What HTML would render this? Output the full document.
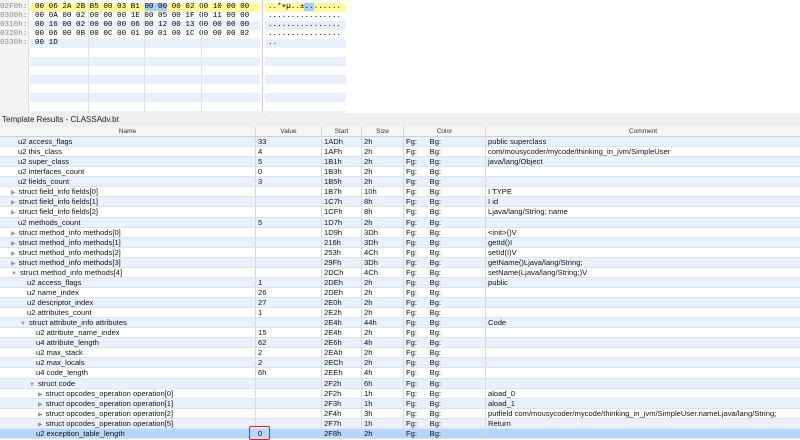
<!DOCTYPE html>
<html><head><meta charset="utf-8"><style>
*{margin:0;padding:0;box-sizing:border-box}
body{width:800px;height:439px;overflow:hidden;background:#fff;font-family:"Liberation Sans",sans-serif;position:relative}
.hex{position:absolute;left:0;top:0;width:800px;height:113px;background:#fff}
.off{position:absolute;left:0;top:0;width:29px;height:113px;background:#f4f4f4;border-right:1px solid #ddd}
.hr{position:absolute;left:0;height:9px;width:350px;font-family:"Liberation Mono",monospace;font-size:7.6px;line-height:9px;white-space:pre}
.hr .o{position:absolute;left:0;color:#888;width:28px}
.hr .h{position:absolute;left:30px;width:230px;height:9px;padding-left:5px}
.hr .a{position:absolute;left:265px;width:81px;height:9px;padding-left:3px}
.st .h,.st .a{background:#e9f0fb}
.yl .h,.yl .a{background:#fdfba0}
.vs{position:absolute;top:0;height:113px;width:1px;background:#e2e2e2}
.gray{position:absolute;left:0;top:113px;width:800px;height:14px;background:#efefef;font-size:8px;line-height:14px;padding-left:2px;color:#222}
.th{position:absolute;top:127px;left:0;width:800px;height:10px;background:#f6f6f6;border-bottom:1px solid #cfcfcf;font-size:6.5px;line-height:10px;color:#333}
.th div,.r div{position:absolute;top:0;height:100%;border-right:1px solid #d8d8d8}
.th div{text-align:center}
.rows{position:absolute;top:137px;left:0;width:800px}
.r{position:relative;height:10.07px;font-size:7.6px;line-height:10px;color:#111;border-bottom:1px solid #dde3ec;white-space:nowrap}
.r:nth-child(odd){background:#ebf1fc}
.r.sel{background:#b6d6fb}
.r div{padding-left:2px;overflow:hidden}
.c1{left:0;width:256px}.c2{left:256px;width:66px}.c3{left:322px;width:40px}.c4{left:362px;width:42px}.c5{left:404px;width:82px}.c6{left:486px;width:314px;border-right:none!important}
.ar{color:#999;font-size:6px;margin-right:3px}
</style></head><body>
<div class="hex">
<div class="off"></div>
<div class="hr" style="top:-6px"><span class="o">0020h:</span><span class="h">00 1D 00 01 00 01 00 00 00 3B 00 02 00 02 00 00</span><span class="a">...............</span></div>
<div class="hr yl" style="top:3px"><span class="o">02F0h:</span><span class="h">00 06 2A 2B B5 00 03 B1 <span style="background:#a9cdf7">00 00</span> 00 02 00 10 00 00</span><span class="a">..*+µ..±<span style="background:#a9cdf7">..</span>......</span></div>
<div class="hr" style="top:12px"><span class="o">0300h:</span><span class="h">00 0A 00 02 00 00 00 1E 00 05 00 1F 00 11 00 00</span><span class="a">................</span></div>
<div class="hr st" style="top:21px"><span class="o">0310h:</span><span class="h">00 16 00 02 00 00 00 06 00 12 00 13 00 00 00 00</span><span class="a">................</span></div>
<div class="hr" style="top:30px"><span class="o">0320h:</span><span class="h">00 06 00 0B 00 0C 00 01 00 01 00 1C 00 00 00 02</span><span class="a">................</span></div>
<div class="hr st" style="top:39px"><span class="o">0330h:</span><span class="h">00 1D</span><span class="a">..</span></div>
<div class="hr st" style="top:57px"><span class="h"></span><span class="a"></span></div>
<div class="hr st" style="top:75px"><span class="h"></span><span class="a"></span></div>
<div class="hr st" style="top:93px"><span class="h"></span><span class="a"></span></div>
<div class="hr st" style="top:111px"><span class="h"></span><span class="a"></span></div>
<div class="vs" style="left:88px"></div><div class="vs" style="left:144px"></div><div class="vs" style="left:201px"></div>
<div class="vs" style="left:262px;background:#ccc"></div>
</div>
<div class="gray">Template Results - CLASSAdv.bt</div>
<div class="th"><div class="c1">Name</div><div class="c2">Value</div><div class="c3">Start</div><div class="c4">Size</div><div class="c5">Color</div><div class="c6" style="text-align:center">Comment</div></div>
<div class="rows">
<div class="r"><div class="c1" style="padding-left:18px">u2 access_flags</div><div class="c2">33</div><div class="c3">1ADh</div><div class="c4">2h</div><div class="c5">Fg:&nbsp;&nbsp;&nbsp;&nbsp;&nbsp;&nbsp;Bg:</div><div class="c6">public superclass</div></div>
<div class="r"><div class="c1" style="padding-left:18px">u2 this_class</div><div class="c2">4</div><div class="c3">1AFh</div><div class="c4">2h</div><div class="c5">Fg:&nbsp;&nbsp;&nbsp;&nbsp;&nbsp;&nbsp;Bg:</div><div class="c6">com/mousycoder/mycode/thinking_in_jvm/SimpleUser</div></div>
<div class="r"><div class="c1" style="padding-left:18px">u2 super_class</div><div class="c2">5</div><div class="c3">1B1h</div><div class="c4">2h</div><div class="c5">Fg:&nbsp;&nbsp;&nbsp;&nbsp;&nbsp;&nbsp;Bg:</div><div class="c6">java/lang/Object</div></div>
<div class="r"><div class="c1" style="padding-left:18px">u2 interfaces_count</div><div class="c2">0</div><div class="c3">1B3h</div><div class="c4">2h</div><div class="c5">Fg:&nbsp;&nbsp;&nbsp;&nbsp;&nbsp;&nbsp;Bg:</div><div class="c6"></div></div>
<div class="r"><div class="c1" style="padding-left:18px">u2 fields_count</div><div class="c2">3</div><div class="c3">1B5h</div><div class="c4">2h</div><div class="c5">Fg:&nbsp;&nbsp;&nbsp;&nbsp;&nbsp;&nbsp;Bg:</div><div class="c6"></div></div>
<div class="r"><div class="c1" style="padding-left:11px"><span class="ar">▶</span>struct field_info fields[0]</div><div class="c2"></div><div class="c3">1B7h</div><div class="c4">10h</div><div class="c5">Fg:&nbsp;&nbsp;&nbsp;&nbsp;&nbsp;&nbsp;Bg:</div><div class="c6">I TYPE</div></div>
<div class="r"><div class="c1" style="padding-left:11px"><span class="ar">▶</span>struct field_info fields[1]</div><div class="c2"></div><div class="c3">1C7h</div><div class="c4">8h</div><div class="c5">Fg:&nbsp;&nbsp;&nbsp;&nbsp;&nbsp;&nbsp;Bg:</div><div class="c6">I id</div></div>
<div class="r"><div class="c1" style="padding-left:11px"><span class="ar">▶</span>struct field_info fields[2]</div><div class="c2"></div><div class="c3">1CFh</div><div class="c4">8h</div><div class="c5">Fg:&nbsp;&nbsp;&nbsp;&nbsp;&nbsp;&nbsp;Bg:</div><div class="c6">Ljava/lang/String; name</div></div>
<div class="r"><div class="c1" style="padding-left:18px">u2 methods_count</div><div class="c2">5</div><div class="c3">1D7h</div><div class="c4">2h</div><div class="c5">Fg:&nbsp;&nbsp;&nbsp;&nbsp;&nbsp;&nbsp;Bg:</div><div class="c6"></div></div>
<div class="r"><div class="c1" style="padding-left:11px"><span class="ar">▶</span>struct method_info methods[0]</div><div class="c2"></div><div class="c3">1D9h</div><div class="c4">3Dh</div><div class="c5">Fg:&nbsp;&nbsp;&nbsp;&nbsp;&nbsp;&nbsp;Bg:</div><div class="c6">&lt;init&gt;()V</div></div>
<div class="r"><div class="c1" style="padding-left:11px"><span class="ar">▶</span>struct method_info methods[1]</div><div class="c2"></div><div class="c3">216h</div><div class="c4">3Dh</div><div class="c5">Fg:&nbsp;&nbsp;&nbsp;&nbsp;&nbsp;&nbsp;Bg:</div><div class="c6">getId()I</div></div>
<div class="r"><div class="c1" style="padding-left:11px"><span class="ar">▶</span>struct method_info methods[2]</div><div class="c2"></div><div class="c3">253h</div><div class="c4">4Ch</div><div class="c5">Fg:&nbsp;&nbsp;&nbsp;&nbsp;&nbsp;&nbsp;Bg:</div><div class="c6">setId(I)V</div></div>
<div class="r"><div class="c1" style="padding-left:11px"><span class="ar">▶</span>struct method_info methods[3]</div><div class="c2"></div><div class="c3">29Fh</div><div class="c4">3Dh</div><div class="c5">Fg:&nbsp;&nbsp;&nbsp;&nbsp;&nbsp;&nbsp;Bg:</div><div class="c6">getName()Ljava/lang/String;</div></div>
<div class="r"><div class="c1" style="padding-left:11px"><span class="ar">▼</span>struct method_info methods[4]</div><div class="c2"></div><div class="c3">2DCh</div><div class="c4">4Ch</div><div class="c5">Fg:&nbsp;&nbsp;&nbsp;&nbsp;&nbsp;&nbsp;Bg:</div><div class="c6">setName(Ljava/lang/String;)V</div></div>
<div class="r"><div class="c1" style="padding-left:27px">u2 access_flags</div><div class="c2">1</div><div class="c3">2DEh</div><div class="c4">2h</div><div class="c5">Fg:&nbsp;&nbsp;&nbsp;&nbsp;&nbsp;&nbsp;Bg:</div><div class="c6">public</div></div>
<div class="r"><div class="c1" style="padding-left:27px">u2 name_index</div><div class="c2">26</div><div class="c3">2DEh</div><div class="c4">2h</div><div class="c5">Fg:&nbsp;&nbsp;&nbsp;&nbsp;&nbsp;&nbsp;Bg:</div><div class="c6"></div></div>
<div class="r"><div class="c1" style="padding-left:27px">u2 descriptor_index</div><div class="c2">27</div><div class="c3">2E0h</div><div class="c4">2h</div><div class="c5">Fg:&nbsp;&nbsp;&nbsp;&nbsp;&nbsp;&nbsp;Bg:</div><div class="c6"></div></div>
<div class="r"><div class="c1" style="padding-left:27px">u2 attributes_count</div><div class="c2">1</div><div class="c3">2E2h</div><div class="c4">2h</div><div class="c5">Fg:&nbsp;&nbsp;&nbsp;&nbsp;&nbsp;&nbsp;Bg:</div><div class="c6"></div></div>
<div class="r"><div class="c1" style="padding-left:20px"><span class="ar">▼</span>struct attribute_info attributes</div><div class="c2"></div><div class="c3">2E4h</div><div class="c4">44h</div><div class="c5">Fg:&nbsp;&nbsp;&nbsp;&nbsp;&nbsp;&nbsp;Bg:</div><div class="c6">Code</div></div>
<div class="r"><div class="c1" style="padding-left:36px">u2 attribute_name_index</div><div class="c2">15</div><div class="c3">2E4h</div><div class="c4">2h</div><div class="c5">Fg:&nbsp;&nbsp;&nbsp;&nbsp;&nbsp;&nbsp;Bg:</div><div class="c6"></div></div>
<div class="r"><div class="c1" style="padding-left:36px">u4 attribute_length</div><div class="c2">62</div><div class="c3">2E6h</div><div class="c4">4h</div><div class="c5">Fg:&nbsp;&nbsp;&nbsp;&nbsp;&nbsp;&nbsp;Bg:</div><div class="c6"></div></div>
<div class="r"><div class="c1" style="padding-left:36px">u2 max_stack</div><div class="c2">2</div><div class="c3">2EAh</div><div class="c4">2h</div><div class="c5">Fg:&nbsp;&nbsp;&nbsp;&nbsp;&nbsp;&nbsp;Bg:</div><div class="c6"></div></div>
<div class="r"><div class="c1" style="padding-left:36px">u2 max_locals</div><div class="c2">2</div><div class="c3">2ECh</div><div class="c4">2h</div><div class="c5">Fg:&nbsp;&nbsp;&nbsp;&nbsp;&nbsp;&nbsp;Bg:</div><div class="c6"></div></div>
<div class="r"><div class="c1" style="padding-left:36px">u4 code_length</div><div class="c2">6h</div><div class="c3">2EEh</div><div class="c4">4h</div><div class="c5">Fg:&nbsp;&nbsp;&nbsp;&nbsp;&nbsp;&nbsp;Bg:</div><div class="c6"></div></div>
<div class="r"><div class="c1" style="padding-left:29px"><span class="ar">▼</span>struct code</div><div class="c2"></div><div class="c3">2F2h</div><div class="c4">6h</div><div class="c5">Fg:&nbsp;&nbsp;&nbsp;&nbsp;&nbsp;&nbsp;Bg:</div><div class="c6"></div></div>
<div class="r"><div class="c1" style="padding-left:38px"><span class="ar">▶</span>struct opcodes_operation operation[0]</div><div class="c2"></div><div class="c3">2F2h</div><div class="c4">1h</div><div class="c5">Fg:&nbsp;&nbsp;&nbsp;&nbsp;&nbsp;&nbsp;Bg:</div><div class="c6">aload_0</div></div>
<div class="r"><div class="c1" style="padding-left:38px"><span class="ar">▶</span>struct opcodes_operation operation[1]</div><div class="c2"></div><div class="c3">2F3h</div><div class="c4">1h</div><div class="c5">Fg:&nbsp;&nbsp;&nbsp;&nbsp;&nbsp;&nbsp;Bg:</div><div class="c6">aload_1</div></div>
<div class="r"><div class="c1" style="padding-left:38px"><span class="ar">▶</span>struct opcodes_operation operation[2]</div><div class="c2"></div><div class="c3">2F4h</div><div class="c4">3h</div><div class="c5">Fg:&nbsp;&nbsp;&nbsp;&nbsp;&nbsp;&nbsp;Bg:</div><div class="c6">putfield com/mousycoder/mycode/thinking_in_jvm/SimpleUser.nameLjava/lang/String;</div></div>
<div class="r"><div class="c1" style="padding-left:38px"><span class="ar">▶</span>struct opcodes_operation operation[5]</div><div class="c2"></div><div class="c3">2F7h</div><div class="c4">1h</div><div class="c5">Fg:&nbsp;&nbsp;&nbsp;&nbsp;&nbsp;&nbsp;Bg:</div><div class="c6">Return</div></div>
<div class="r sel"><div class="c1" style="padding-left:36px">u2 exception_table_length</div><div class="c2">0</div><div class="c3">2F8h</div><div class="c4">2h</div><div class="c5">Fg:&nbsp;&nbsp;&nbsp;&nbsp;&nbsp;&nbsp;Bg:</div><div class="c6"></div></div>
</div>
<div style="position:absolute;left:249px;top:426px;width:21px;height:14px;border:1.5px solid #e02020;border-radius:2px"></div>
</body></html>
